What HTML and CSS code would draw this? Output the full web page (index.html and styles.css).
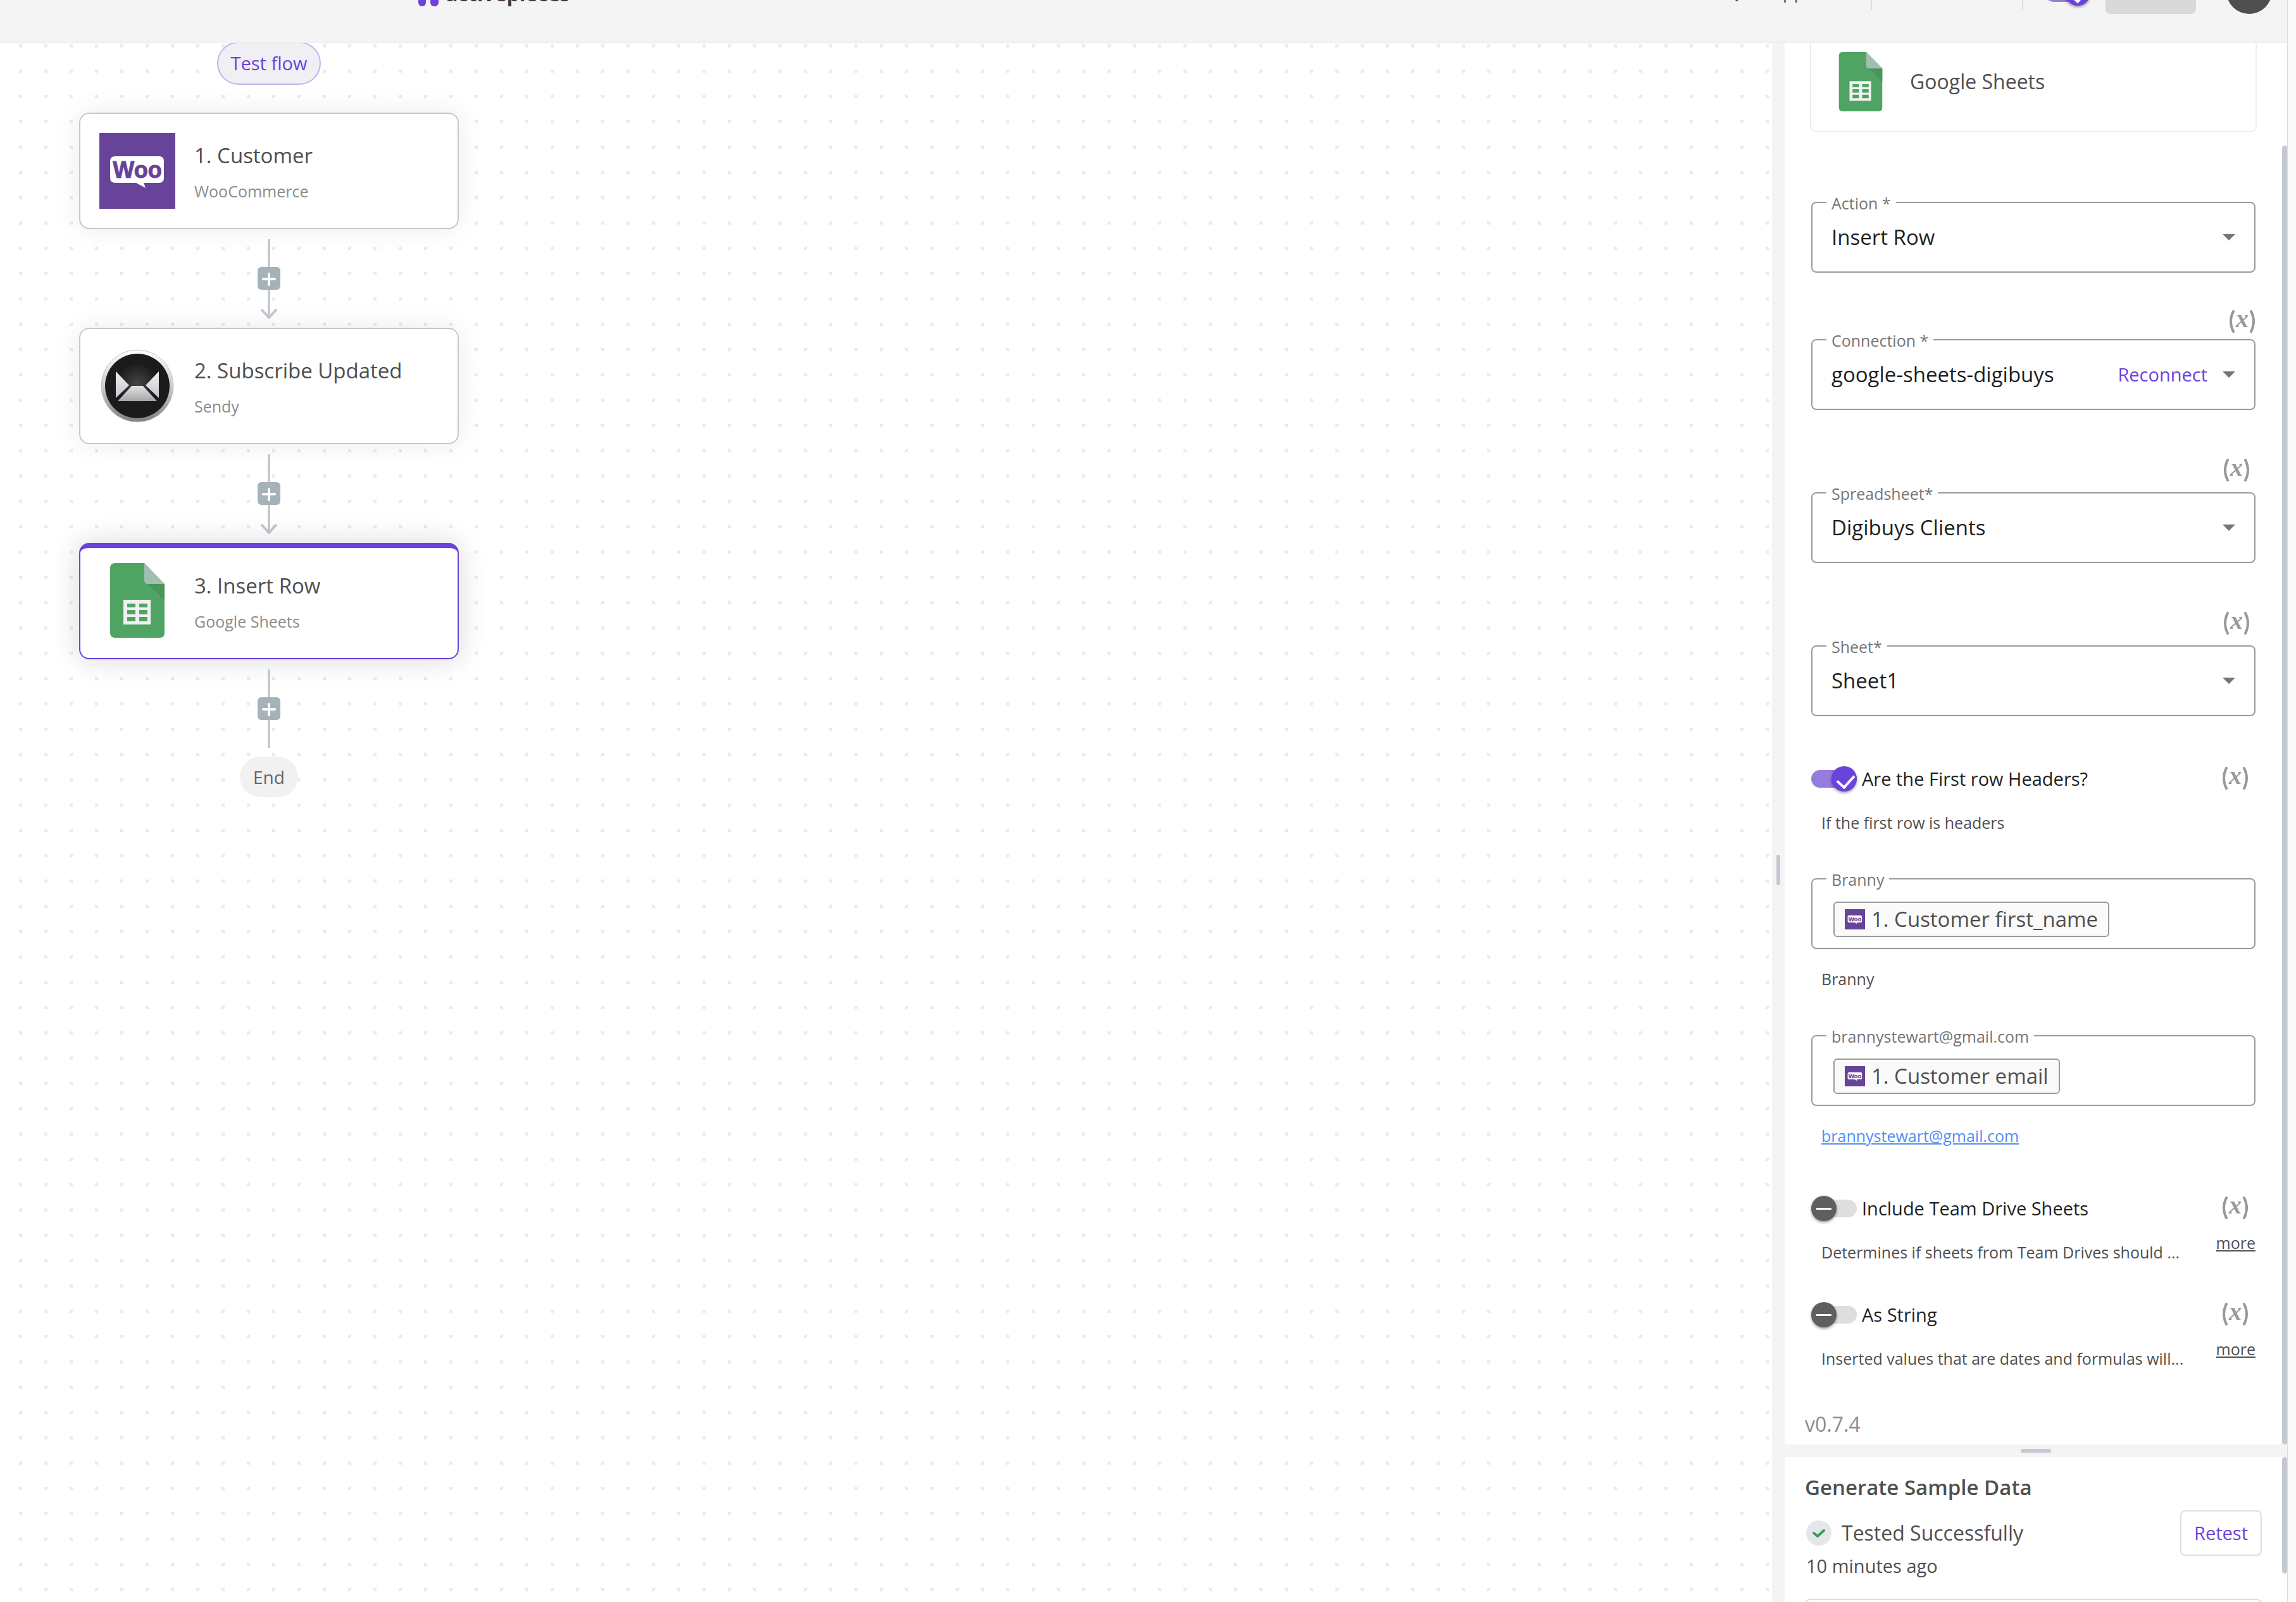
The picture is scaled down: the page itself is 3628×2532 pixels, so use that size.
FILE: index.html
```html
<!DOCTYPE html>
<html lang="en">
<head>
    <meta charset="UTF-8">
    <meta name="viewport" content="width=device-width, initial-scale=1.0">
    <title>activepieces</title>
    <link rel="stylesheet" href="styles.css">
</head>
<body>
    <!-- Shared icons -->
    <svg class="icon-defs" aria-hidden="true">
        <defs>
            <linearGradient id="silver" x1="0" y1="0" x2="0" y2="1">
                <stop offset="0" stop-color="#ffffff"/>
                <stop offset="0.5" stop-color="#c9cdd1"/>
                <stop offset="1" stop-color="#808080"/>
            </linearGradient>
            <linearGradient id="paper" x1="0" y1="0" x2="0" y2="1">
                <stop offset="0" stop-color="#f0f1f6"/>
                <stop offset="1" stop-color="#c4c6ca"/>
            </linearGradient>
            <linearGradient id="flap" x1="0" y1="0" x2="0" y2="1">
                <stop offset="0" stop-color="#e2e2e2"/>
                <stop offset="1" stop-color="#a6a6a8"/>
            </linearGradient>
            <radialGradient id="glow">
                <stop offset="0" stop-color="#454545"/>
                <stop offset="1" stop-color="#1b1b1b"/>
            </radialGradient>
            <g id="woo">
                <rect width="120" height="120" fill="#674399"/>
                <path d="M25 37h69q8 0 8 8v26q0 8-8 8H70l3 8-15-8H25q-8 0-8-8V45q0-8 8-8z" fill="#fff"/>
            </g>
            <path id="parens" d="M7 3Q-1 19 7 35M35 3q8 16 0 32" fill="none" stroke="#999" stroke-width="4" stroke-linecap="round"/>
        </defs>
        <symbol id="sheets" viewBox="0 0 86 118">
            <path d="M8 0h46l32 33v77q0 8-8 8H8q-8 0-8-8V8q0-8 8-8z" fill="#4fa463"/>
            <path d="M58 31l28 28V33z" fill="#489558"/>
            <path d="M54 0l32 33H60q-6 0-6-6z" fill="#a1bfb0"/>
            <path d="M21 58h43v39H21zM27 64v6h13v-6zM46 64v6h13v-6zM27 74v7h13v-7zM46 74v7h13v-7zM27 85v7h13v-7zM46 85v7h13v-7z" fill="#f1f1f3" fill-rule="evenodd"/>
        </symbol>
        <symbol id="plus" viewBox="0 0 36 36">
            <path d="M18 11v17M9 19h18" stroke="#fff" stroke-width="4" stroke-linecap="round"/>
        </symbol>
    </svg>

    <div class="app">
        <header class="top-bar">
            <div class="brand">
                <svg class="brand-icon" viewBox="0 0 34 40" aria-hidden="true">
                    <rect x="1" y="2" width="12" height="38" rx="6" fill="#6a43dc"/>
                    <rect x="20" y="2" width="13" height="38" rx="6" fill="#6a43dc"/>
                </svg>
                <span class="brand-name">activepieces</span>
            </div>
            <div class="top-actions">
                <a href="#" class="support">
                    <svg width="36" height="32" viewBox="0 0 36 32" aria-hidden="true"><path d="M4 2h28v22H16l-5 7v-7H4z" fill="none" stroke="#4f4f4f" stroke-width="3"/></svg>
                    Support
                </a>
                <div class="divider divider-first"></div>
                <div class="divider divider-second"></div>
                <input type="checkbox" class="switch" aria-label="Enabled" checked>
                <button type="button" class="publish" aria-label="Publish"></button>
                <button type="button" class="avatar" aria-label="Account"></button>
            </div>
        </header>

        <div class="main-content">
            <main class="canvas">
                <div class="flow">
                    <button type="button" class="test-flow">Test flow</button>

                    <section class="step">
                        <svg class="step-icon" viewBox="0 0 120 120"><use href="#woo"/><text x="60" y="71" class="woo-text">Woo</text></svg>
                        <div class="step-text">
                            <div class="step-title">1. Customer</div>
                            <div class="step-piece">WooCommerce</div>
                        </div>
                    </section>
                    <div class="connector">
                        <div class="line"></div>
                        <button type="button" class="add-step" aria-label="Add step"><svg width="36" height="36"><use href="#plus"/></svg></button>
                        <svg class="arrow" viewBox="0 0 28 46"><path d="M14 0v44M2 31l12 13 12-13" fill="none" stroke="#c4c8d0" stroke-width="4"/></svg>
                    </div>

                    <section class="step">
                        <svg class="step-icon" viewBox="0 0 120 120">
                            <circle cx="60" cy="60" r="57" fill="url(#silver)" stroke="#c2c4ca" stroke-width="1"/>
                            <circle cx="60" cy="60" r="51" fill="#1b1b1b"/>
                            <circle cx="60" cy="56" r="32" fill="url(#glow)"/>
                            <path d="M26 37l21 22-21 20z" fill="url(#paper)"/>
                            <path d="M94 37L73 59l21 20z" fill="url(#paper)"/>
                            <path d="M51 60h18l22 24H29z" fill="url(#flap)"/>
                        </svg>
                        <div class="step-text">
                            <div class="step-title">2. Subscribe Updated</div>
                            <div class="step-piece">Sendy</div>
                        </div>
                    </section>
                    <div class="connector">
                        <div class="line"></div>
                        <button type="button" class="add-step" aria-label="Add step"><svg width="36" height="36"><use href="#plus"/></svg></button>
                        <svg class="arrow" viewBox="0 0 28 46"><path d="M14 0v44M2 31l12 13 12-13" fill="none" stroke="#c4c8d0" stroke-width="4"/></svg>
                    </div>

                    <section class="step selected">
                        <svg class="step-icon"><use href="#sheets" height="118"/></svg>
                        <div class="step-text">
                            <div class="step-title">3. Insert Row</div>
                            <div class="step-piece">Google Sheets</div>
                        </div>
                    </section>
                    <div class="connector">
                        <div class="line"></div>
                        <button type="button" class="add-step" aria-label="Add step"><svg width="36" height="36"><use href="#plus"/></svg></button>
                        <div class="line"></div>
                    </div>
                    <div class="flow-end">End</div>
                </div>
            </main>

            <div class="splitter-vertical"><div class="grip"></div></div>

            <aside class="sidebar">
                <div class="panel">
                    <form class="settings">
                        <div class="piece-card">
                            <svg class="piece-icon"><use href="#sheets"/></svg>
                            <span>Google Sheets</span>
                        </div>

                        <div class="field">
                            <label for="action">Action *</label>
                            <select id="action"><option>Insert Row</option></select>
                            <svg class="caret" viewBox="0 0 20 10"><path d="M0 0h20L10 10z"/></svg>
                        </div>

                        <div class="variable-row flush">
                            <button type="button" class="variable" aria-label="Dynamic value"><svg viewBox="0 0 42 38"><use href="#parens"/><text x="21" y="28">x</text></svg></button>
                        </div>
                        <div class="field">
                            <label for="connection">Connection *</label>
                            <select id="connection"><option>google-sheets-digibuys</option></select>
                            <button type="button" class="reconnect">Reconnect</button>
                            <svg class="caret" viewBox="0 0 20 10"><path d="M0 0h20L10 10z"/></svg>
                        </div>

                        <div class="variable-row">
                            <button type="button" class="variable" aria-label="Dynamic value"><svg viewBox="0 0 42 38"><use href="#parens"/><text x="21" y="28">x</text></svg></button>
                        </div>
                        <div class="field">
                            <label for="spreadsheet">Spreadsheet*</label>
                            <select id="spreadsheet"><option>Digibuys Clients</option></select>
                            <svg class="caret" viewBox="0 0 20 10"><path d="M0 0h20L10 10z"/></svg>
                        </div>

                        <div class="variable-row">
                            <button type="button" class="variable" aria-label="Dynamic value"><svg viewBox="0 0 42 38"><use href="#parens"/><text x="21" y="28">x</text></svg></button>
                        </div>
                        <div class="field">
                            <label for="sheet">Sheet*</label>
                            <select id="sheet"><option>Sheet1</option></select>
                            <svg class="caret" viewBox="0 0 20 10"><path d="M0 0h20L10 10z"/></svg>
                        </div>

                        <div class="toggle-row toggle-spaced">
                            <input type="checkbox" class="switch" id="headers" checked>
                            <label for="headers">Are the First row Headers?</label>
                            <button type="button" class="variable" aria-label="Dynamic value"><svg viewBox="0 0 42 38"><use href="#parens"/><text x="21" y="28">x</text></svg></button>
                        </div>
                        <p class="hint hint-toggle">If the first row is headers</p>

                        <div class="field field-text">
                            <label for="branny">Branny</label>
                            <span class="chip"><svg viewBox="0 0 120 120"><use href="#woo"/><text x="60" y="71" class="woo-text">Woo</text></svg>1. Customer first_name</span>
                            <input type="text" id="branny">
                        </div>
                        <p class="hint">Branny</p>

                        <div class="field field-text">
                            <label for="email">brannystewart@gmail.com</label>
                            <span class="chip"><svg viewBox="0 0 120 120"><use href="#woo"/><text x="60" y="71" class="woo-text">Woo</text></svg>1. Customer email</span>
                            <input type="text" id="email">
                        </div>
                        <p class="hint"><a href="mailto:brannystewart@gmail.com">brannystewart@gmail.com</a></p>

                        <div class="toggle-row toggle-spaced">
                            <input type="checkbox" class="switch" id="team-drive">
                            <label for="team-drive">Include Team Drive Sheets</label>
                            <button type="button" class="variable" aria-label="Dynamic value"><svg viewBox="0 0 42 38"><use href="#parens"/><text x="21" y="28">x</text></svg></button>
                        </div>
                        <div class="hint-row">
                            <p class="hint">Determines if sheets from Team Drives should ...</p>
                            <button type="button" class="more">more</button>
                        </div>

                        <div class="toggle-row">
                            <input type="checkbox" class="switch" id="as-string">
                            <label for="as-string">As String</label>
                            <button type="button" class="variable" aria-label="Dynamic value"><svg viewBox="0 0 42 38"><use href="#parens"/><text x="21" y="28">x</text></svg></button>
                        </div>
                        <div class="hint-row">
                            <p class="hint">Inserted values that are dates and formulas will...</p>
                            <button type="button" class="more">more</button>
                        </div>

                        <div class="version">v0.7.4</div>
                    </form>
                    <div class="scroll-track scroll-settings"><div class="scroll-thumb"></div></div>
                </div>

                <div class="splitter-horizontal"><div class="grip"></div></div>

                <div class="panel panel-test">
                    <div class="sample-data">
                        <h2>Generate Sample Data</h2>
                        <div class="test-row">
                            <div class="test-info">
                                <div class="test-status">
                                    <svg width="40" height="40" viewBox="0 0 40 40" aria-hidden="true">
                                        <circle cx="20" cy="20" r="20" fill="#e6e7eb"/>
                                        <path d="M12 20l6 5 10-9" fill="none" stroke="#3f9a58" stroke-width="4" stroke-linecap="round" stroke-linejoin="round"/>
                                    </svg>
                                    Tested Successfully
                                </div>
                                <div class="test-time">10 minutes ago</div>
                            </div>
                            <button type="button" class="retest">Retest</button>
                        </div>
                        <div class="result"></div>
                    </div>
                    <div class="scroll-track scroll-test"><div class="scroll-thumb"></div></div>
                </div>
            </aside>
        </div>
    </div>
</body>
</html>
```

FILE: styles.css
```css
:root {
    --purple: #6a43dc;
    --purple-light: #967cdf;
    --grey-bg: #f4f4f4;
    --grey-line: #c4c8d0;
    --field-line: #9b9b9b;
    --card-line: #ededf1;
    --text-dark: #1f1f1f;
    --text: #4f4f4f;
    --text-light: #8c8c8c;
}

* {
    box-sizing: border-box;
}

body {
    margin: 0;
    padding-right: 13px;
    height: 100vh;
    overflow: hidden;
    background: #f9f9f9;
    font-family: "Open Sans", "Noto Sans", sans-serif;
    font-size: 32px;
    line-height: 44px;
    color: var(--text);
}

button,
select,
input {
    margin: 0;
    padding: 0;
    border: none;
    background: none;
    font: inherit;
    color: inherit;
}

button {
    cursor: pointer;
}

.icon-defs {
    position: absolute;
    width: 0;
    height: 0;
}

.woo-text {
    font: bold 36px "Liberation Sans", sans-serif;
    text-anchor: middle;
    fill: #674399;
    stroke: #674399;
}

.app {
    display: flex;
    flex-direction: column;
    height: 100vh;
    border-right: 1px solid #dcdce0;
    background: #fff;
}

/* Top bar, scrolled partly out of view */
.top-bar {
    position: relative;
    z-index: 1;
    flex: none;
    display: flex;
    justify-content: space-between;
    align-items: center;
    height: 162px;
    margin-top: -94px;
    padding: 0 24px 0 660px;
    border-bottom: 2px solid var(--card-line);
    background: var(--grey-bg);
}

.brand {
    display: flex;
    align-items: center;
    gap: 10px;
    padding-top: 8px;
}

.brand-icon {
    width: 34px;
    height: 40px;
}

.brand-name {
    font-weight: bold;
    color: #3a3a3a;
}

.top-actions {
    display: flex;
    align-items: center;
}

.top-actions .switch {
    margin-top: 6px;
}

.support {
    display: flex;
    align-items: center;
    gap: 14px;
    margin-right: 64px;
    font-size: 29px;
    color: var(--text);
    text-decoration: none;
}

.divider {
    width: 2px;
    height: 60px;
    background: #dedede;
}

.divider-first {
    margin-right: 237px;
}

.divider-second {
    margin-right: 34px;
}

.publish {
    width: 143px;
    height: 72px;
    margin: 0 48px 0 24px;
    border-radius: 8px;
    background: #d8d9da;
}

.avatar {
    width: 72px;
    height: 72px;
    border-radius: 50%;
    background: var(--text);
}

/* Toggle switches */
.switch {
    appearance: none;
    position: relative;
    flex: none;
    width: 72px;
    height: 28px;
    border-radius: 14px;
    background: #dedede;
}

.switch::before {
    content: "";
    position: absolute;
    top: -6px;
    left: 0;
    width: 40px;
    height: 40px;
    border-radius: 50%;
    background: #5f5f5f;
    box-shadow: 0 2px 4px rgba(0, 0, 0, 0.4);
}

.switch::after {
    content: "";
    position: absolute;
    top: 13px;
    left: 8px;
    width: 24px;
    height: 3px;
    background: #fff;
}

.switch:checked {
    background: var(--purple-light);
}

.switch:checked::before {
    left: 32px;
    background: var(--purple);
}

.switch:checked::after {
    top: 2px;
    left: 46px;
    width: 13px;
    height: 22px;
    border: solid #fff;
    border-width: 0 4px 4px 0;
    background: none;
    transform: rotate(42deg);
}

.main-content {
    display: flex;
    flex: 1;
    min-height: 0;
}

/* Flow canvas, dotted every 40px */
.canvas {
    flex: 1;
    padding-left: 125px;
    background:
        linear-gradient(90deg, #fff 35px, transparent 35px) -5px 0 / 40px 40px,
        linear-gradient(#fff 35px, #ebebef 35px) 0 7px / 40px 40px;
}

.flow {
    display: flex;
    flex-direction: column;
    align-items: center;
    width: 600px;
}

.test-flow {
    height: 68px;
    margin: -2px 0 44px;
    padding: 0 20px;
    border: 2px solid #bab7f3;
    border-radius: 34px;
    background: #efeff4;
    font-size: 29px;
    color: var(--purple);
}

.step {
    display: flex;
    align-items: center;
    gap: 30px;
    width: 100%;
    height: 184px;
    padding: 30px;
    border: 2px solid var(--grey-line);
    border-radius: 16px;
    background: #fff;
    box-shadow: 0 0 44px rgba(0, 0, 0, 0.08);
}

.step.selected {
    padding-top: 24px;
    border-color: var(--purple);
    border-top-width: 8px;
    box-shadow: 0 0 44px rgba(40, 40, 70, 0.18);
}

.step-icon {
    width: 120px;
    height: 120px;
}

.step-text {
    padding-top: 4px;
}

.step-title {
    margin-bottom: 16px;
    font-size: 33px;
}

.step-piece {
    font-size: 25px;
    line-height: 36px;
    color: var(--text-light);
}

.connector {
    display: flex;
    flex-direction: column;
    align-items: center;
    padding: 16px 0 14px;
}

.line {
    width: 4px;
    height: 44px;
    background: var(--grey-line);
}

.add-step {
    width: 36px;
    height: 36px;
    border-radius: 6px;
    background: #a5b3b9;
}

.add-step svg {
    display: block;
}

.arrow {
    width: 28px;
    height: 46px;
}

.flow-end {
    padding: 10px 21px;
    border-radius: 32px;
    background: #f1f1f3;
    font-size: 28px;
    color: #666;
}

/* Splitters */
.splitter-vertical {
    display: flex;
    align-items: center;
    justify-content: center;
    width: 20px;
    padding-top: 150px;
    background: var(--grey-bg);
}

.splitter-horizontal {
    flex: none;
    display: flex;
    align-items: center;
    justify-content: center;
    height: 20px;
    background: var(--grey-bg);
}

.grip {
    border-radius: 3px;
    background: var(--grey-line);
}

.splitter-vertical .grip {
    width: 6px;
    height: 48px;
}

.splitter-horizontal .grip {
    width: 48px;
    height: 6px;
}

/* Sidebar */
.sidebar {
    display: flex;
    flex-direction: column;
    width: 794px;
    background: #fff;
}

.panel {
    flex: none;
    display: flex;
}

.panel-test {
    flex: 1;
    min-height: 0;
    overflow: hidden;
}

.scroll-track {
    width: 8px;
}

.scroll-thumb {
    height: 100%;
    border-radius: 4px;
    background: var(--grey-line);
}

.scroll-settings {
    padding-top: 162px;
}

.scroll-test {
    padding-bottom: 45px;
}

.settings {
    flex: 1;
    min-width: 0;
    padding: 0 42px 10px;
}

.piece-card {
    display: flex;
    align-items: center;
    gap: 30px;
    height: 141px;
    margin: 0 -2px 110px;
    padding: 0 30px 18px;
    border: 2px solid var(--card-line);
    border-top: none;
    border-radius: 0 0 10px 10px;
}

.piece-icon {
    width: 96px;
    height: 94px;
}

.field {
    position: relative;
    display: flex;
    align-items: center;
    height: 112px;
    border: 2px solid var(--field-line);
    border-radius: 8px;
    font-size: 33px;
}

.field label {
    position: absolute;
    top: -18px;
    left: 22px;
    padding: 0 8px;
    background: #fff;
    font-size: 25px;
    line-height: 36px;
    color: #757575;
}

.field select {
    appearance: none;
    flex: 1;
    height: 100%;
    padding-left: 30px;
    color: var(--text-dark);
}

.caret {
    width: 20px;
    height: 10px;
    margin: 0 30px 0 24px;
    fill: #757575;
}

.reconnect {
    font-size: 29px;
    color: var(--purple);
}

.field-text {
    padding: 18px 30px 0 33px;
}

.field-text input {
    flex: 1;
    min-width: 0;
    outline: none;
}

.chip {
    display: flex;
    align-items: center;
    gap: 10px;
    height: 56px;
    padding: 0 16px;
    border: 2px solid var(--field-line);
    border-radius: 6px;
    background: #fafafa;
}

.chip svg {
    width: 32px;
    height: 32px;
}

.variable,
.variable svg {
    display: block;
    width: 42px;
    height: 38px;
}

.variable text {
    font: italic bold 40px "Liberation Serif", serif;
    text-anchor: middle;
    fill: #999;
}

.variable-row {
    display: flex;
    justify-content: flex-end;
    padding: 76px 9px 16px 0;
}

.variable-row.flush {
    padding: 58px 0 9px;
}

.toggle-row {
    display: flex;
    align-items: center;
    gap: 8px;
    height: 40px;
    margin-top: 63px;
    padding-right: 11px;
    font-size: 29px;
    color: var(--text-dark);
}

.toggle-row label {
    flex: 1;
}

.toggle-row .variable {
    align-self: flex-start;
}

.toggle-spaced {
    margin-top: 79px;
}

.hint {
    margin: 31px 16px 73px;
    font-size: 25px;
    line-height: 32px;
}

.hint-toggle {
    margin: 33px 16px 72px;
}

.hint a {
    color: #4e8ff5;
}

.hint + .toggle-row {
    margin-top: 79px;
}

.hint-row {
    display: flex;
    justify-content: space-between;
    align-items: flex-start;
    margin-top: 18px;
}

.hint-row .hint {
    margin: 15px 0 0 16px;
}

.more {
    font-size: 25px;
    line-height: 32px;
    text-decoration: underline;
}

.version {
    margin: 66px 0 0 -10px;
    color: var(--text-light);
}

/* Sample data */
.sample-data {
    flex: 1;
    padding: 26px 32px 0;
}

.sample-data h2 {
    margin: 0 0 14px;
    font-size: 33px;
    font-weight: 600;
}

.test-row {
    display: flex;
    justify-content: space-between;
    align-items: flex-start;
    margin-bottom: 33px;
}

.test-info {
    padding: 14px 0 0 2px;
}

.test-status {
    display: flex;
    align-items: center;
    gap: 16px;
    margin-bottom: 11px;
}

.test-time {
    font-size: 29px;
    line-height: 38px;
}

.retest {
    height: 72px;
    padding: 0 20px;
    border: 2px solid #dedede;
    border-radius: 8px;
    font-size: 29px;
    color: var(--purple);
}

.result {
    height: 200px;
    border: 2px solid #dedede;
    border-radius: 8px;
}
```
